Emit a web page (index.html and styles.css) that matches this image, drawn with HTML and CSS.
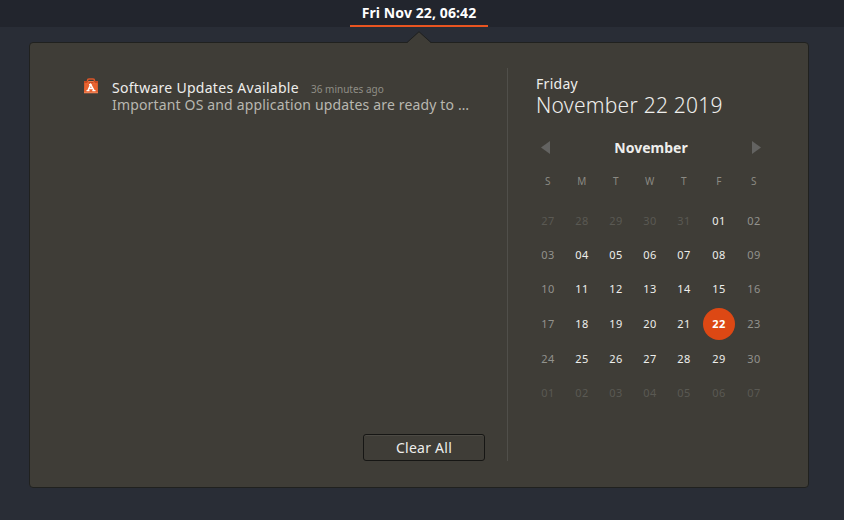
FILE: index.html
```html
<!DOCTYPE html>
<html lang="en">
<head>
<meta charset="utf-8">
<title>Calendar</title>
<link rel="stylesheet" href="styles.css">
</head>
<body>
<header class="topbar"><div class="clock"><span>Fri Nov 22, 06:42</span></div></header>
<main class="panel">
  <svg class="pointer" width="26" height="12" viewBox="0 0 26 12"><path d="M1 12 13 1 25 12Z" fill="#3f3d37"/><path d="M1 11.500 13 .7 25 11.500" fill="none" stroke="#20211f"/></svg>
  <section class="messages">
    <article class="notice">
      <svg class="bag" width="16" height="16" viewBox="0 0 16 16">
        <path d="M4.500 4V2.500Q4.500 1 6 1H10Q11.500 1 11.500 2.500V4" fill="none" stroke="#dc5528" stroke-width="1.500"/>
        <path d="M1.200 3H14.800L15 15H1Z" fill="#e8622f"/>
        <path d="M1.200 3H14.800V5H1.200Z" fill="#c9491f"/>
        <path d="M1 14H15V15.300H1Z" fill="#f08052"/>
        <path d="M5 5.500V4.500Q5 3.500 6 3.500H10Q11 3.500 11 4.500V5.500" fill="none" stroke="#f08656" stroke-width=".8"/>
        <path d="M5 12.500 7.700 6.500 11 12.500M6 10.500H10" fill="none" stroke="#fff" stroke-width="1.500"/>
        <path d="M3.500 12.700H6.500M9.300 12.700H12.500M6 6.700H8.500" fill="none" stroke="#fff" stroke-width="1.200"/>
      </svg>
      <div class="notice-text">
        <div class="heading"><span class="title">Software Updates Available</span><span class="time">36 minutes ago</span></div>
        <div class="body">Important OS and application updates are ready to …</div>
      </div>
    </article>
    <button class="clear"><span>Clear All</span></button>
  </section>
  <section class="calendar">
    <div class="weekday">Friday</div>
    <div class="date">November 22 2019</div>
    <div class="month">
      <svg width="9" height="13" viewBox="0 0 9 13"><path d="M9 0V13L0 6.500Z" fill="#636361"/></svg>
      <span>November</span>
      <svg width="9" height="13" viewBox="0 0 9 13"><path d="M0 0V13L9 6.500Z" fill="#636361"/></svg>
    </div>
    <div class="days">
      <b>S</b><b>M</b><b>T</b><b>W</b><b>T</b><b>F</b><b>S</b>
      <i class="out first">27</i><i class="out first">28</i><i class="out first">29</i><i class="out first">30</i><i class="out first">31</i><i class="first">01</i><i class="end first">02</i>
      <i class="end">03</i><i>04</i><i>05</i><i>06</i><i>07</i><i>08</i><i class="end">09</i>
      <i class="end">10</i><i>11</i><i>12</i><i>13</i><i>14</i><i>15</i><i class="end">16</i>
      <i class="end">17</i><i>18</i><i>19</i><i>20</i><i>21</i><i class="today">22</i><i class="end">23</i>
      <i class="end">24</i><i>25</i><i>26</i><i>27</i><i>28</i><i>29</i><i class="end">30</i>
      <i class="out">01</i><i class="out">02</i><i class="out">03</i><i class="out">04</i><i class="out">05</i><i class="out">06</i><i class="out">07</i>
    </div>
  </section>
</main>
</body>
</html>
```
FILE: styles.css
```css
* { box-sizing: border-box; }
body { margin: 0; width: 844px; height: 520px; overflow: hidden; background: #292d36; font-family: "Noto Sans", "Open Sans", sans-serif; font-size: 14px; color: #eeeeec; }
.topbar { height: 27px; background: #22252d; display: flex; justify-content: center; padding-right: 6px; }
.clock { width: 138px; height: 27px; border-bottom: 2px solid #e95420; line-height: 26px; text-align: center; font-weight: 700; font-size: 14px; letter-spacing: 0.1px; color: #fff; white-space: nowrap; }
.panel { position: relative; width: 780px; height: 446px; margin: 15px 0 0 29px; background: #3f3d37; border: 1px solid #20211f; border-radius: 4px; display: flex; padding: 25px 36px 26px 52px; }
.pointer { position: absolute; left: 376px; top: -12px; }
.messages { width: 426px; border-right: 1px solid #504f4a; display: flex; flex-direction: column; justify-content: space-between; }
.notice { display: flex; padding-top: 11px; }
.bag { margin: -1px 13px 0 1px; flex: none; }
.notice-text { white-space: nowrap; }
.heading { display: flex; align-items: baseline; height: 17px; line-height: 17px; }
.title { width: 199px; letter-spacing: 0.28px; }
.time { font-size: 10px; color: #8f8e86; }
.body { line-height: 17px; letter-spacing: 0.16px; color: #b8b7b0; }
.clear { align-self: flex-end; margin-right: 22px; width: 122px; height: 27px; padding: 0; background: #3f3d37; border: 1px solid #161614; border-radius: 3px; box-shadow: inset 0 1px #4c4a44; color: #eeeeec; font: 14px "Noto Sans", sans-serif; letter-spacing: 0.25px; line-height: 24px; }
.calendar { width: 264px; padding: 7px 0 0 23px; }
.weekday { height: 18px; line-height: 18px; padding-left: 5px; letter-spacing: 0.3px; }
.date { height: 24px; line-height: 24px; padding-left: 5px; font-size: 21px; font-weight: 300; letter-spacing: 0.25px; white-space: nowrap; }
.month { display: flex; justify-content: space-between; align-items: center; height: 20px; margin-top: 20px; padding: 0 10px 0 10px; width: 240px; font-weight: 700; }
.days { display: grid; width: 240px; margin-top: 7px; grid-template-columns: repeat(5, 34px) 36px 34px; grid-template-rows: 34px 40px 34px 34px 36px 34px 34px; font-size: 11px; }
.days b, .days i { display: flex; justify-content: center; align-items: center; font-style: normal; letter-spacing: .5px; }
.days b { font-size: 10px; font-weight: 400; color: #8b8a83; }
.days i { padding-bottom: 2px; }
.days .first { padding-top: 6px; }
.days .out { color: #5a5953; }
.days .end { color: #92928d; }
.days .today { width: 32px; height: 32px; place-self: center; border-radius: 50%; background: #dd4814; color: #fff; font-weight: 700; }
```
